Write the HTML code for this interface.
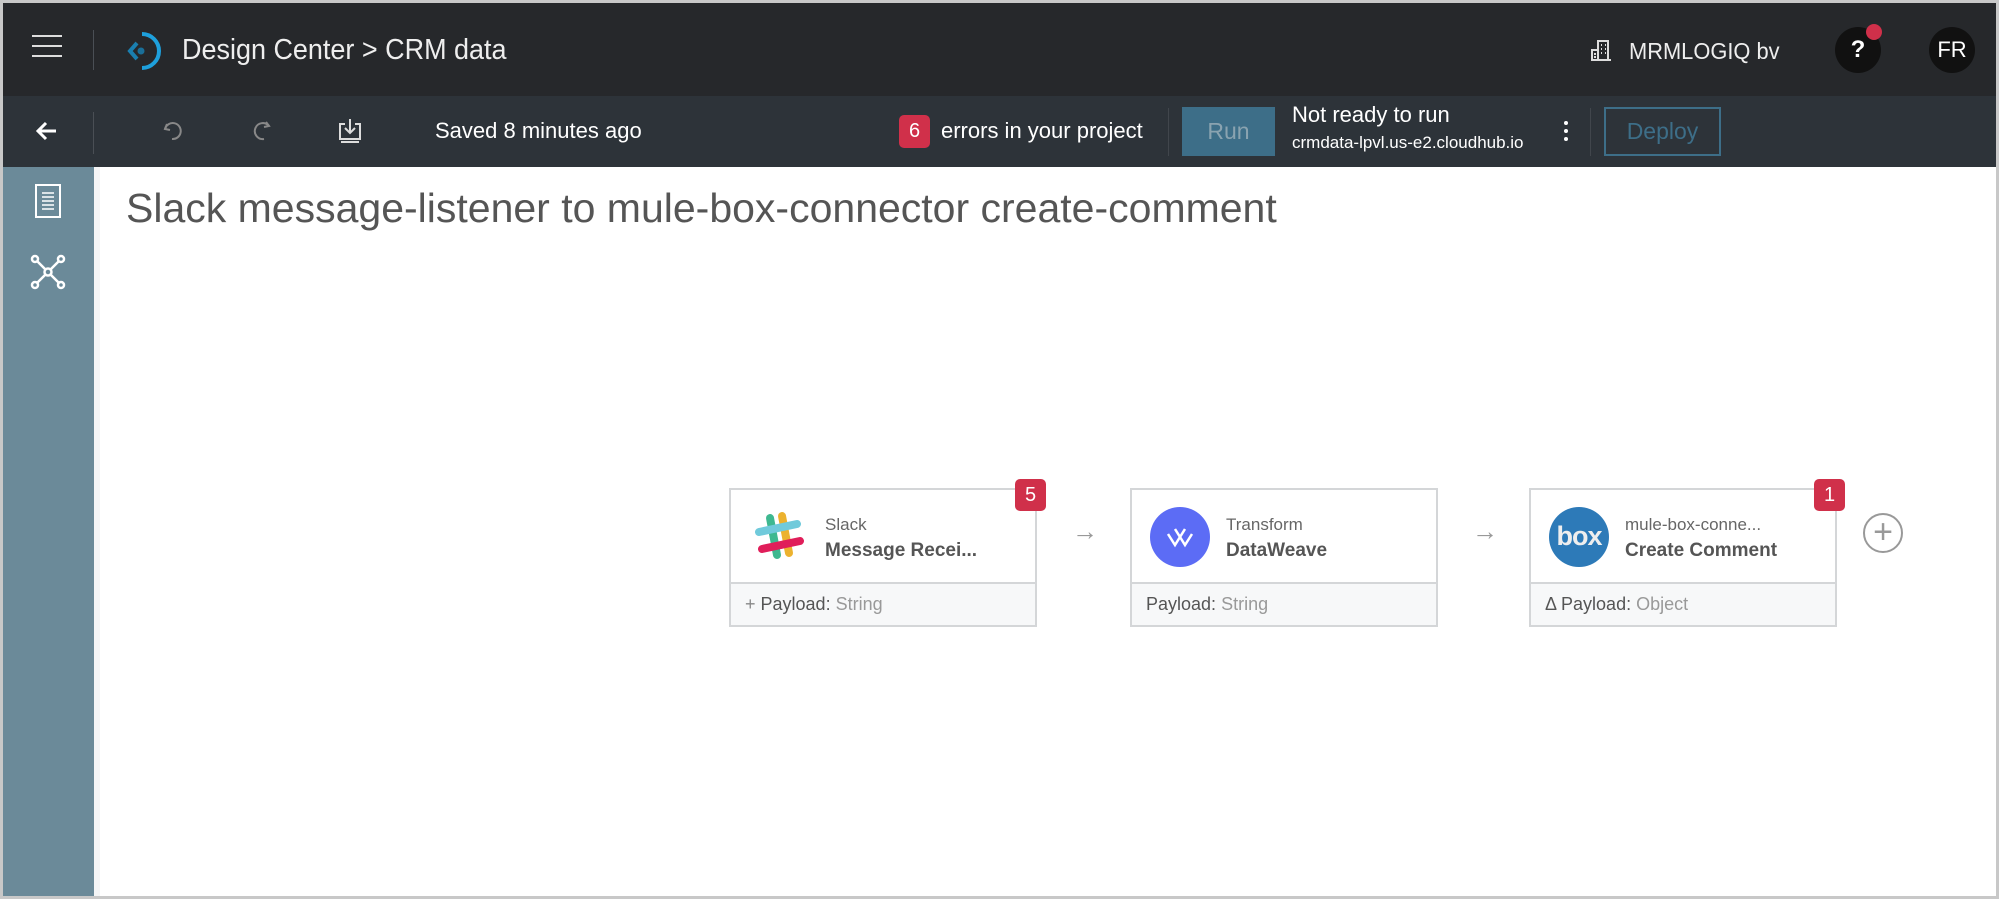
<!DOCTYPE html>
<html><head><meta charset="utf-8"><style>
*{box-sizing:border-box;margin:0;padding:0}
body{width:1999px;height:899px;overflow:hidden;background:#c8c8c8;font-family:"Liberation Sans",sans-serif;position:relative}
.abs{position:absolute}
#top{left:3px;top:3px;width:1993px;height:93px;background:#26282b}
#bar{left:3px;top:96px;width:1993px;height:71px;background:#2d3339}
#side{left:3px;top:167px;width:91px;height:729px;background:#6b8a99}
#main{left:94px;top:167px;width:1902px;height:729px;background:#fff;border-left:6px solid #f4f5f6}
.nar{font-family:"Liberation Sans Narrow","Liberation Sans",sans-serif}
.sep{width:1px;background:#4a4f55}
.card{width:308px;height:139px;border:2px solid #d4d6d8;background:#fff}
.card .hd{height:94px;border-bottom:2px solid #d4d6d8;position:relative}
.card .ft{height:41px;background:#f7f8f9;font-size:18px;color:#555;padding:10px 0 0 14px}
.card .ft span{color:#999}
.ic{position:absolute;left:18px;top:17px;width:60px;height:60px;border-radius:50%}
.t1{position:absolute;left:94px;top:25px;font-size:17px;color:#666}
.t2{position:absolute;left:94px;top:50px;font-size:19px;color:#555;font-weight:bold}
.badge{width:31px;height:32px;background:#d0304a;border-radius:5px;color:#fff;font-size:20px;text-align:center;line-height:32px}
.arrow{font-size:26px;color:#999}
</style></head><body>
<div id="top" class="abs"></div>
<div id="bar" class="abs"></div>
<div id="side" class="abs"></div>
<div id="main" class="abs"></div>

<!-- top bar -->
<div class="abs" style="left:32px;top:35px;width:30px;height:2px;background:#ddd"></div>
<div class="abs" style="left:32px;top:45px;width:30px;height:2px;background:#ddd"></div>
<div class="abs" style="left:32px;top:55px;width:30px;height:2px;background:#ddd"></div>
<div class="abs sep" style="left:93px;top:30px;height:40px"></div>
<svg class="abs" style="left:122px;top:30px" width="42" height="42" viewBox="0 0 42 42">
<path d="M20 4 A17 17 0 1 1 20 38" fill="none" stroke="#1ea0dc" stroke-width="4"/>
<path d="M15 13 L8 21 L15 29" fill="none" stroke="#1a7fb0" stroke-width="4"/>
<circle cx="19" cy="21" r="3.5" fill="#1a6f99"/></svg>
<div class="abs nar" style="left:182px;top:34px;font-size:29px;color:#eee;transform:scaleX(0.93);transform-origin:left">Design Center &gt; CRM data</div>
<svg class="abs" style="left:1590px;top:38px" width="22" height="24" viewBox="0 0 22 24" fill="none" stroke="#ddd" stroke-width="2"><path d="M8 22V3h10v19M2 22V12h6M1 22h20M11 7h1M15 7h1M11 11h1M15 11h1M11 15h1M15 15h1M4 16h2M4 19h2"/></svg>
<div class="abs nar" style="left:1629px;top:38px;font-size:23px;color:#eee;transform:scaleX(0.95);transform-origin:left">MRMLOGIQ bv</div>
<div class="abs" style="left:1835px;top:27px;width:46px;height:46px;border-radius:50%;background:#111;color:#fff;font-weight:bold;font-size:24px;text-align:center;line-height:46px">?</div>
<div class="abs" style="left:1866px;top:24px;width:16px;height:16px;border-radius:50%;background:#d0304a"></div>
<div class="abs nar" style="left:1929px;top:27px;width:46px;height:46px;border-radius:50%;background:#111;color:#fff;font-size:22px;text-align:center;line-height:46px">FR</div>

<!-- second bar -->
<svg class="abs" style="left:36px;top:121px" width="22" height="20" viewBox="0 0 22 20" fill="none" stroke="#fff" stroke-width="3"><path d="M20 10H3M10 2L2 10l8 8"/></svg>
<div class="abs sep" style="left:93px;top:112px;height:42px"></div>
<svg class="abs" style="left:161px;top:119px" width="24" height="24" viewBox="0 0 24 24" fill="none" stroke="#888" stroke-width="2"><path d="M6 5L4 10l5 1"/><path d="M4 10A8 8 0 1 1 11 20"/></svg>
<svg class="abs" style="left:249px;top:119px" width="24" height="24" viewBox="0 0 24 24" fill="none" stroke="#888" stroke-width="2"><path d="M17 3l3 4-5 1"/><path d="M20 7A8 8 0 1 0 15 20"/></svg>
<svg class="abs" style="left:337px;top:117px" width="26" height="28" viewBox="0 0 26 28" fill="none" stroke="#ddd" stroke-width="2"><path d="M13 2v14M8 11l5 5 5-5M8 7H3v15h20V7h-5"/><path d="M4 25h18"/></svg>
<div class="abs nar" style="left:435px;top:118px;font-size:22px;color:#fff">Saved 8 minutes ago</div>
<div class="abs badge nar" style="left:899px;top:115px;height:33px;line-height:33px">6</div>
<div class="abs nar" style="left:941px;top:118px;font-size:22px;color:#fff">errors in your project</div>
<div class="abs sep" style="left:1168px;top:108px;height:48px;background:#41464c"></div>
<div class="abs nar" style="left:1182px;top:107px;width:93px;height:49px;background:#3d6e88;color:#8aa3b0;font-size:23px;text-align:center;line-height:49px">Run</div>
<div class="abs nar" style="left:1292px;top:102px;font-size:22px;color:#fff">Not ready to run</div>
<div class="abs nar" style="left:1292px;top:133px;font-size:17px;color:#fff">crmdata-lpvl.us-e2.cloudhub.io</div>
<div class="abs" style="left:1564px;top:121px;width:4px;height:4px;border-radius:2px;background:#fff;box-shadow:0 8px 0 #fff,0 16px 0 #fff"></div>
<div class="abs sep" style="left:1590px;top:108px;height:48px;background:#41464c"></div>
<div class="abs nar" style="left:1604px;top:107px;width:117px;height:49px;border:2px solid #3d6e88;color:#3d6e88;font-size:23px;text-align:center;line-height:45px">Deploy</div>

<!-- sidebar icons -->
<svg class="abs" style="left:34px;top:183px" width="28" height="36" viewBox="0 0 28 36" fill="none" stroke="#fff" stroke-width="2"><rect x="2" y="2" width="24" height="32"/><path d="M8 10h12M8 14h12M8 18h12M8 22h12M8 26h12" stroke-width="1.5"/></svg>
<svg class="abs" style="left:30px;top:254px" width="36" height="36" viewBox="0 0 36 36" fill="none" stroke="#fff" stroke-width="2.5"><circle cx="18" cy="18" r="3.5"/><circle cx="5" cy="5" r="3"/><circle cx="31" cy="5" r="3"/><circle cx="5" cy="31" r="3"/><circle cx="31" cy="31" r="3"/><path d="M7 7l8 8M29 7l-8 8M7 29l8-8M29 29l-8-8"/></svg>

<!-- title -->
<div class="abs" style="left:126px;top:185px;font-size:41px;color:#555">Slack message-listener to mule-box-connector create-comment</div>

<!-- cards -->
<div class="abs card" style="left:729px;top:488px">
 <div class="hd">
  <svg class="ic" viewBox="0 0 60 60" style="background:none"><g stroke-width="8" stroke-linecap="round">
   <path d="M21 11l7 37" stroke="#3eb890"/><path d="M33 9l7 37" stroke="#ecb22e"/>
   <path d="M10 25l38-8" stroke="#70cadb"/><path d="M13 42l38-8" stroke="#e01e5a"/></g></svg>
  <div class="t1">Slack</div><div class="t2">Message Recei...</div>
 </div>
 <div class="ft"><b style="font-weight:normal;color:#888">+</b> Payload: <span>String</span></div>
</div>
<div class="abs badge" style="left:1015px;top:479px">5</div>
<div class="abs arrow" style="left:1072px;top:516px">→</div>

<div class="abs card" style="left:1130px;top:488px">
 <div class="hd">
  <div class="ic" style="background:#5c6cf5"></div>
  <svg class="abs" style="left:34px;top:36px" width="28" height="22" viewBox="0 0 28 22" fill="none" stroke="#fff" stroke-width="2.5"><path d="M2 8l7 11 5-8 5 8 7-11M9 3l5 8 5-8"/></svg>
  <div class="t1">Transform</div><div class="t2">DataWeave</div>
 </div>
 <div class="ft">Payload: <span>String</span></div>
</div>
<div class="abs arrow" style="left:1472px;top:516px">→</div>

<div class="abs card" style="left:1529px;top:488px">
 <div class="hd">
  <div class="ic" style="background:#2d7ab8;color:#eee;font-size:27px;font-weight:bold;text-align:center;line-height:58px;letter-spacing:-1px">box</div>
  <div class="t1">mule-box-conne...</div><div class="t2">Create Comment</div>
 </div>
 <div class="ft">Δ Payload: <span>Object</span></div>
</div>
<div class="abs badge" style="left:1814px;top:479px">1</div>
<div class="abs" style="left:1863px;top:513px;width:40px;height:40px;border:2px solid #999;border-radius:50%;color:#999;font-size:34px;text-align:center;line-height:34px;font-weight:300">+</div>
</body></html>
